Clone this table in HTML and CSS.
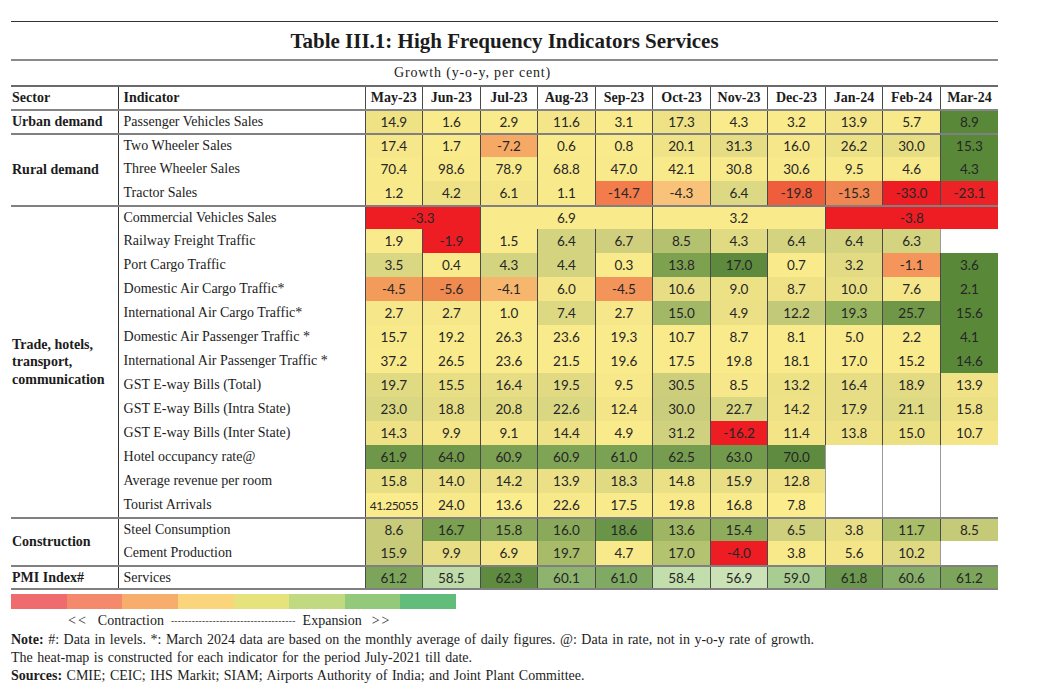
FILE: index.html
```html
<!DOCTYPE html>
<html lang="en">
<head>
<meta charset="utf-8">
<title>Table III.1: High Frequency Indicators Services</title>
<link rel="stylesheet" href="styles.css">
</head>
<body>
<div class="page">
  <h1 class="title">Table III.1: High Frequency Indicators Services</h1>
  <div class="unit">Growth (y-o-y, per cent)</div>
  <table class="hf">
    <colgroup>
      <col class="c-sec"><col class="c-ind">
      <col class="c-m"><col class="c-m"><col class="c-m"><col class="c-m"><col class="c-m"><col class="c-m"><col class="c-m"><col class="c-m"><col class="c-m"><col class="c-m"><col class="c-m">
    </colgroup>
    <thead>
      <tr>
        <th class="sec">Sector</th><th class="ind">Indicator</th>
        <th>May-23</th><th>Jun-23</th><th>Jul-23</th><th>Aug-23</th><th>Sep-23</th><th>Oct-23</th><th>Nov-23</th><th>Dec-23</th><th>Jan-24</th><th>Feb-24</th><th>Mar-24</th>
      </tr>
    </thead>
    <tbody>
      <tr class="grp">
        <td class="sec">Urban demand</td><td class="ind">Passenger Vehicles Sales</td>
        <td style="background:#EFE285">14.9</td><td style="background:#F9EA8B">1.6</td><td style="background:#F9EA8B">2.9</td><td style="background:#F4E588">11.6</td><td style="background:#F9EA8B">3.1</td><td style="background:#EFE286">17.3</td><td style="background:#F9EA8B">4.3</td><td style="background:#F9EA8B">3.2</td><td style="background:#F3E588">13.9</td><td style="background:#F8E98A">5.7</td><td style="background:#598839">8.9</td>
      </tr>
      <tr class="grp">
        <td class="sec" rowspan="3">Rural demand</td><td class="ind">Two Wheeler Sales</td>
        <td style="background:#F6E78A">17.4</td><td style="background:#F9EA8B">1.7</td><td style="background:#F6A964">-7.2</td><td style="background:#F9EA8B">0.6</td><td style="background:#F9EA8B">0.8</td><td style="background:#F0E387">20.1</td><td style="background:#E5DC83">31.3</td><td style="background:#F6E78A">16.0</td><td style="background:#EDE186">26.2</td><td style="background:#E7DE84">30.0</td><td style="background:#598839">15.3</td>
      </tr>
      <tr>
        <td class="ind">Three Wheeler Sales</td>
        <td style="background:#F8E98B">70.4</td><td style="background:#F8E98B">98.6</td><td style="background:#F8E98B">78.9</td><td style="background:#F8E98B">68.8</td><td style="background:#F8E98B">47.0</td><td style="background:#F8E98B">42.1</td><td style="background:#F8E98B">30.8</td><td style="background:#F8E98B">30.6</td><td style="background:#F8E98B">9.5</td><td style="background:#F8E98B">4.6</td><td style="background:#598839">4.3</td>
      </tr>
      <tr>
        <td class="ind">Tractor Sales</td>
        <td style="background:#F8E98B">1.2</td><td style="background:#EEE186">4.2</td><td style="background:#F3E588">6.1</td><td style="background:#F8E98B">1.1</td><td style="background:#F27C4C">-14.7</td><td style="background:#F8C27A">-4.3</td><td style="background:#DCD883">6.4</td><td style="background:#EE5D3C">-19.8</td><td style="background:#F08652">-15.3</td><td style="background:#EE1D23">-33.0</td><td style="background:#ED2226">-23.1</td>
      </tr>
      <tr class="grp">
        <td class="sec" rowspan="13">Trade, hotels,<br>transport,<br>communication</td><td class="ind">Commercial Vehicles Sales</td>
        <td colspan="2" style="background:#EE1D23">-3.3</td><td colspan="3" style="background:#F9EA8B">6.9</td><td colspan="3" style="background:#F9EA8B">3.2</td><td colspan="3" style="background:#EE1D23">-3.8</td>
      </tr>
      <tr>
        <td class="ind">Railway Freight Traffic</td>
        <td style="background:#F9EA8B">1.9</td><td style="background:#EE1D23">-1.9</td><td style="background:#F9EA8B">1.5</td><td style="background:#D3D380">6.4</td><td style="background:#CFCF7E">6.7</td><td style="background:#B4C26F">8.5</td><td style="background:#E0DA83">4.3</td><td style="background:#D3D380">6.4</td><td style="background:#D3D380">6.4</td><td style="background:#D3D380">6.3</td><td class="e"></td>
      </tr>
      <tr>
        <td class="ind">Port Cargo Traffic</td>
        <td style="background:#DAD782">3.5</td><td style="background:#F9EA8B">0.4</td><td style="background:#D4D480">4.3</td><td style="background:#D4D480">4.4</td><td style="background:#F9EA8B">0.3</td><td style="background:#7EA150">13.8</td><td style="background:#5D8A3D">17.0</td><td style="background:#F9EA8B">0.7</td><td style="background:#E2DB84">3.2</td><td style="background:#F4955B">-1.1</td><td style="background:#598839">3.6</td>
      </tr>
      <tr>
        <td class="ind">Domestic Air Cargo Traffic*</td>
        <td style="background:#F29B5A">-4.5</td><td style="background:#EF8A51">-5.6</td><td style="background:#F7B66D">-4.1</td><td style="background:#F4E588">6.0</td><td style="background:#F3945A">-4.5</td><td style="background:#E6DD84">10.6</td><td style="background:#EDE186">9.0</td><td style="background:#EFE286">8.7</td><td style="background:#E9DF85">10.0</td><td style="background:#F5E789">7.6</td><td style="background:#598839">2.1</td>
      </tr>
      <tr>
        <td class="ind">International Air Cargo Traffic*</td>
        <td style="background:#F6E78A">2.7</td><td style="background:#F6E78A">2.7</td><td style="background:#F9EA8B">1.0</td><td style="background:#DDD983">7.4</td><td style="background:#F6E78A">2.7</td><td style="background:#A3B866">15.0</td><td style="background:#ECE086">4.9</td><td style="background:#C2C978">12.2</td><td style="background:#94B15E">19.3</td><td style="background:#6F9747">25.7</td><td style="background:#598839">15.6</td>
      </tr>
      <tr>
        <td class="ind">Domestic Air Passenger Traffic *</td>
        <td style="background:#F8E98A">15.7</td><td style="background:#F9EA8B">19.2</td><td style="background:#F9EA8B">26.3</td><td style="background:#F9EA8B">23.6</td><td style="background:#F9EA8B">19.3</td><td style="background:#F9EA8B">10.7</td><td style="background:#F9EA8B">8.7</td><td style="background:#F9EA8B">8.1</td><td style="background:#F9EA8B">5.0</td><td style="background:#F9EA8B">2.2</td><td style="background:#598839">4.1</td>
      </tr>
      <tr>
        <td class="ind">International Air Passenger Traffic *</td>
        <td style="background:#F9EA8B">37.2</td><td style="background:#F9EA8B">26.5</td><td style="background:#F9EA8B">23.6</td><td style="background:#F9EA8B">21.5</td><td style="background:#F9EA8B">19.6</td><td style="background:#F9EA8B">17.5</td><td style="background:#F9EA8B">19.8</td><td style="background:#F9EA8B">18.1</td><td style="background:#F9EA8B">17.0</td><td style="background:#F9EA8B">15.2</td><td style="background:#598839">14.6</td>
      </tr>
      <tr>
        <td class="ind">GST E-way Bills (Total)</td>
        <td style="background:#E0DA83">19.7</td><td style="background:#E8DF85">15.5</td><td style="background:#E6DD84">16.4</td><td style="background:#E1DA83">19.5</td><td style="background:#F7E88A">9.5</td><td style="background:#CCCE7C">30.5</td><td style="background:#F6E78A">8.5</td><td style="background:#EDE186">13.2</td><td style="background:#E6DD84">16.4</td><td style="background:#E3DB84">18.9</td><td style="background:#F0E387">13.9</td>
      </tr>
      <tr>
        <td class="ind">GST E-way Bills (Intra State)</td>
        <td style="background:#D9D782">23.0</td><td style="background:#E4DC84">18.8</td><td style="background:#E0DA83">20.8</td><td style="background:#DAD782">22.6</td><td style="background:#F3E588">12.4</td><td style="background:#CACD7C">30.0</td><td style="background:#DAD782">22.7</td><td style="background:#EFE286">14.2</td><td style="background:#E6DD84">17.9</td><td style="background:#DED983">21.1</td><td style="background:#ECE085">15.8</td>
      </tr>
      <tr>
        <td class="ind">GST E-way Bills (Inter State)</td>
        <td style="background:#EEE186">14.3</td><td style="background:#F5E789">9.9</td><td style="background:#F6E78A">9.1</td><td style="background:#EEE186">14.4</td><td style="background:#F9EA8B">4.9</td><td style="background:#D0D17E">31.2</td><td style="background:#EE1D23">-16.2</td><td style="background:#F2E487">11.4</td><td style="background:#EFE286">13.8</td><td style="background:#ECE085">15.0</td><td style="background:#F3E588">10.7</td>
      </tr>
      <tr>
        <td class="ind">Hotel occupancy rate@</td>
        <td style="background:#6E9749">61.9</td><td style="background:#72994B">64.0</td><td style="background:#7DA153">60.9</td><td style="background:#80A456">60.9</td><td style="background:#7BA153">61.0</td><td style="background:#769D4F">62.5</td><td style="background:#729A4C">63.0</td><td style="background:#5F8B40">70.0</td><td class="e"></td><td class="e"></td><td class="e"></td>
      </tr>
      <tr>
        <td class="ind">Average revenue per room</td>
        <td style="background:#E8DF85">15.8</td><td style="background:#ECE086">14.0</td><td style="background:#EBE085">14.2</td><td style="background:#ECE086">13.9</td><td style="background:#E0DA83">18.3</td><td style="background:#EAE085">14.8</td><td style="background:#E7DE85">15.9</td><td style="background:#EFE286">12.8</td><td class="e"></td><td class="e"></td><td class="e"></td>
      </tr>
      <tr>
        <td class="ind">Tourist Arrivals</td>
        <td class="long" style="background:#FAEB8C">41.25055</td><td style="background:#F7E88A">24.0</td><td style="background:#FBEC8E">13.6</td><td style="background:#F7E88A">22.6</td><td style="background:#F9EA8B">17.5</td><td style="background:#F8E98A">19.8</td><td style="background:#F9EA8B">16.8</td><td style="background:#FBEC8E">7.8</td><td class="e"></td><td class="e"></td><td class="e"></td>
      </tr>
      <tr class="grp">
        <td class="sec" rowspan="2">Construction</td><td class="ind">Steel Consumption</td>
        <td style="background:#C8CB7A">8.6</td><td style="background:#7AA050">16.7</td><td style="background:#8CAA5B">15.8</td><td style="background:#8AA95A">16.0</td><td style="background:#6A9447">18.6</td><td style="background:#9EB664">13.6</td><td style="background:#8FAC5C">15.4</td><td style="background:#CFD07E">6.5</td><td style="background:#E8DE85">3.8</td><td style="background:#AABD69">11.7</td><td style="background:#C5CA79">8.5</td>
      </tr>
      <tr>
        <td class="ind">Cement Production</td>
        <td style="background:#C6CA79">15.9</td><td style="background:#E7DE85">9.9</td><td style="background:#F3E588">6.9</td><td style="background:#A7BB68">19.7</td><td style="background:#F8E98A">4.7</td><td style="background:#B4C370">17.0</td><td style="background:#EE1D23">-4.0</td><td style="background:#F8E98A">3.8</td><td style="background:#F4E688">5.6</td><td style="background:#DFD983">10.2</td><td class="e"></td>
      </tr>
      <tr class="grp last">
        <td class="sec">PMI Index#</td><td class="ind">Services</td>
        <td style="background:#7CA45B">61.2</td><td style="background:#BFDBA9">58.5</td><td style="background:#5F8B41">62.3</td><td style="background:#8DB36F">60.1</td><td style="background:#80A963">61.0</td><td style="background:#C3DEAD">58.4</td><td style="background:#CBE2B7">56.9</td><td style="background:#A9CC92">59.0</td><td style="background:#6C974F">61.8</td><td style="background:#86AE68">60.6</td><td style="background:#7CA45B">61.2</td>
      </tr>
    </tbody>
  </table>

  <div class="legend">
    <span class="sw s1"></span><span class="sw s2"></span><span class="sw s3"></span><span class="sw s4"></span><span class="sw s5"></span><span class="sw s6"></span><span class="sw s7"></span><span class="sw s8"></span>
  </div>
  <div class="legend-cap"><span class="arr">&lt;&lt;</span><span>Contraction</span><span class="dash">------------------------------------</span><span>Expansion</span><span class="arr">&gt;&gt;</span></div>

  <div class="notes">
    <p><b>Note:</b> #: Data in levels. *: March 2024 data are based on the monthly average of daily figures. @: Data in rate, not in y-o-y rate of growth.</p>
    <p>The heat-map is constructed for each indicator for the period July-2021 till date.</p>
    <p><b>Sources:</b> CMIE; CEIC; IHS Markit; SIAM; Airports Authority of India; and Joint Plant Committee.</p>
  </div>
</div>
</body>
</html>
```

FILE: styles.css
```css
html, body {
  margin: 0;
  background: #ffffff;
}

body {
  font-family: "Liberation Serif", "Times New Roman", serif;
  color: #1c1c1c;
}

.page {
  width: 987px;
  margin-left: 11px;
  padding-top: 21px;
}

.title {
  margin: 0;
  height: 35px;
  padding-top: 2px;
  line-height: 35px;
  border-top: 1px solid #333333;
  border-bottom: 2px solid #8a8a8a;
  font-size: 21px;
  font-weight: bold;
  text-align: center;
}

.unit {
  height: 24px;
  line-height: 24px;
  padding-left: 383px;
  font-size: 14px;
  letter-spacing: 0.85px;
}

.hf {
  width: 987px;
  table-layout: fixed;
  border-collapse: collapse;
  font-size: 14px;
}

.c-sec { width: 107px; }
.c-ind { width: 247px; }
.c-m { width: 57.545px; }

.hf th,
.hf td {
  height: 24px;
  padding: 0;
  text-align: center;
  vertical-align: middle;
  border-left: 1px solid #4a4a4a;
  white-space: nowrap;
}

.hf thead th {
  height: 22px;
  font-weight: bold;
  border-top: 2px solid #6a6a6a;
  border-bottom: 2px solid #858585;
}

.hf td {
  font-family: "Lato", "Open Sans", sans-serif;
  font-size: 13.5px;
  color: #262626;
}

.hf .sec {
  border-left: none;
  text-align: left;
  padding-left: 1px;
  font-family: "Liberation Serif", "Times New Roman", serif;
  font-size: 14px;
  font-weight: bold;
  line-height: 17.5px;
  color: #1c1c1c;
  white-space: normal;
}

.hf .ind {
  border-left: 1px solid #333333;
  text-align: left;
  padding-left: 5px;
  font-family: "Liberation Serif", "Times New Roman", serif;
  font-size: 14px;
  color: #1c1c1c;
}

.hf tr.grp > td {
  height: 22px;
  border-top: 2px solid #808080;
}

.hf tr.last > td {
  height: 21px;
  border-bottom: 2px solid #808080;
}

.hf td.e {
  background: #ffffff;
  border-left: 1px solid #9a9a9a;
}

.hf td.long {
  font-size: 12px;
  letter-spacing: -0.4px;
}

.legend {
  display: flex;
  width: 445px;
  height: 15px;
  margin-top: 4px;
}

.sw {
  flex: 1 1 0;
}

.s1 { background: #EF6B6D; }
.s2 { background: #F48A6B; }
.s3 { background: #F7AD6C; }
.s4 { background: #FBD57C; }
.s5 { background: #E6E27C; }
.s6 { background: #C1D981; }
.s7 { background: #93C97B; }
.s8 { background: #63BD7A; }

.legend-cap {
  display: flex;
  align-items: center;
  gap: 7px;
  height: 18px;
  margin-top: 3px;
  padding-left: 54px;
  font-size: 14px;
}

.legend-cap .arr {
  letter-spacing: 2px;
  margin: 0 3px;
}

.legend-cap .dash {
  font-size: 9.5px;
  letter-spacing: 0.3px;
  color: #444444;
}

.notes {
  margin-top: 1px;
  font-size: 14px;
  word-spacing: 1px;
}

.notes p {
  margin: 0;
  line-height: 18px;
}
```
